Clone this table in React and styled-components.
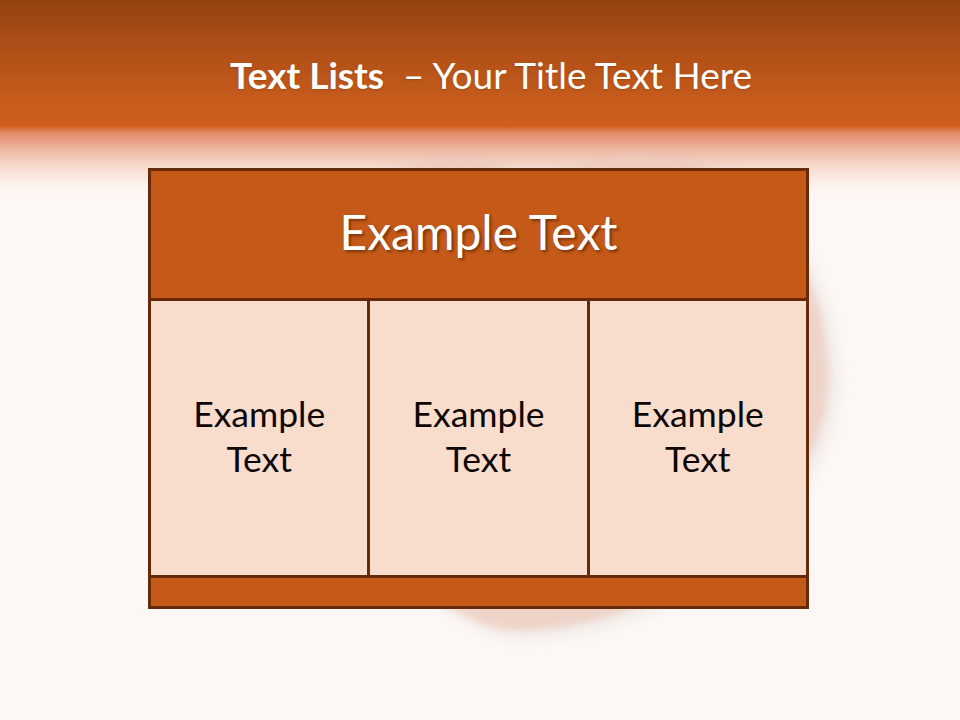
import React from 'react';
import styled, { createGlobalStyle } from 'styled-components';

const GlobalStyle = createGlobalStyle`
  html, body {
    margin: 0;
    padding: 0;
    background: #fdf8f5;
  }
`;

const Slide = styled.div`
  position: relative;
  width: 960px;
  height: 720px;
  overflow: hidden;
  font-family: Lato, "Open Sans", sans-serif;
  background: linear-gradient(
    180deg,
    #93430f 0px,
    #ad4e17 45px,
    #c45a1b 95px,
    #d0601c 126px,
    #e38a6a 133px,
    #efb9a3 150px,
    #f7dcd0 168px,
    #fcf2ec 185px,
    #fdf8f5 200px
  );
`;

const Peach = styled.svg`
  position: absolute;
  left: 288px;
  top: 130px;
  width: 580px;
  height: 520px;
  pointer-events: none;
`;

const TitleBar = styled.h1`
  margin: 0;
  height: 150px;
  padding: 0 0 2px 22px;
  box-sizing: border-box;
  display: flex;
  align-items: center;
  justify-content: center;
  color: #ffffff;
  font-size: 37px;
  font-weight: 400;
  white-space: pre;
  text-shadow: 0 1px 2px rgba(80, 30, 0, 0.25);
`;

const TitleBold = styled.span`
  font-weight: 700;
`;

const Content = styled.div`
  position: relative;
  padding: 18px 0 0 148px;
`;

const Table = styled.div`
  width: 661px;
  box-sizing: border-box;
  border: 3px solid #662a0b;
  background: #662a0b;
  display: grid;
  grid-template-rows: 127px 274px 28px;
  row-gap: 3px;
`;

const HeaderCell = styled.div`
  background: #c55a18;
  display: flex;
  align-items: center;
  justify-content: center;
  color: #ffffff;
  font-size: 48px;
  padding-bottom: 6px;
  text-shadow: 2px 2px 3px rgba(60, 20, 0, 0.55);
`;

const Row = styled.div`
  display: grid;
  grid-template-columns: 1fr 1fr 1fr;
  column-gap: 3px;
`;

const Cell = styled.div`
  background: #f8ddcd;
  display: flex;
  align-items: center;
  justify-content: center;
  text-align: center;
  color: #0d0604;
  font-size: 35.5px;
  line-height: 45px;
  padding-bottom: 4px;
`;

const Footer = styled.div`
  background: #c55a18;
`;

const PEACH =
  'M 232 50 C 180 8, 50 18, 28 160 C 10 300, 90 470, 215 500 C 370 508, 545 380, 540 240 C 535 100, 430 0, 312 30 C 272 40, 248 45, 232 50 Z';

const cells = ['Example Text', 'Example Text', 'Example Text'];

export default function App() {
  return (
    <Slide>
      <GlobalStyle />
      <Peach viewBox="0 0 580 520">
        <defs>
          <filter id="soft" x="-20%" y="-20%" width="140%" height="140%">
            <feGaussianBlur stdDeviation="3" />
          </filter>
          <filter id="shade" x="-20%" y="-20%" width="140%" height="140%">
            <feGaussianBlur stdDeviation="9" />
          </filter>
        </defs>
        <path d={PEACH} fill="#cbbcb8" opacity="0.35" filter="url(#shade)" transform="translate(6 4)" />
        <path d={PEACH} fill="#f0c9ba" opacity="0.6" filter="url(#soft)" />
      </Peach>
      <TitleBar>
        <TitleBold>Text Lists</TitleBold>{'  – Your Title Text Here'}
      </TitleBar>
      <Content>
        <Table>
          <HeaderCell>Example Text</HeaderCell>
          <Row>
            {cells.map((t, i) => (
              <Cell key={i}>
                Example
                <br />
                Text
              </Cell>
            ))}
          </Row>
          <Footer />
        </Table>
      </Content>
    </Slide>
  );
}
